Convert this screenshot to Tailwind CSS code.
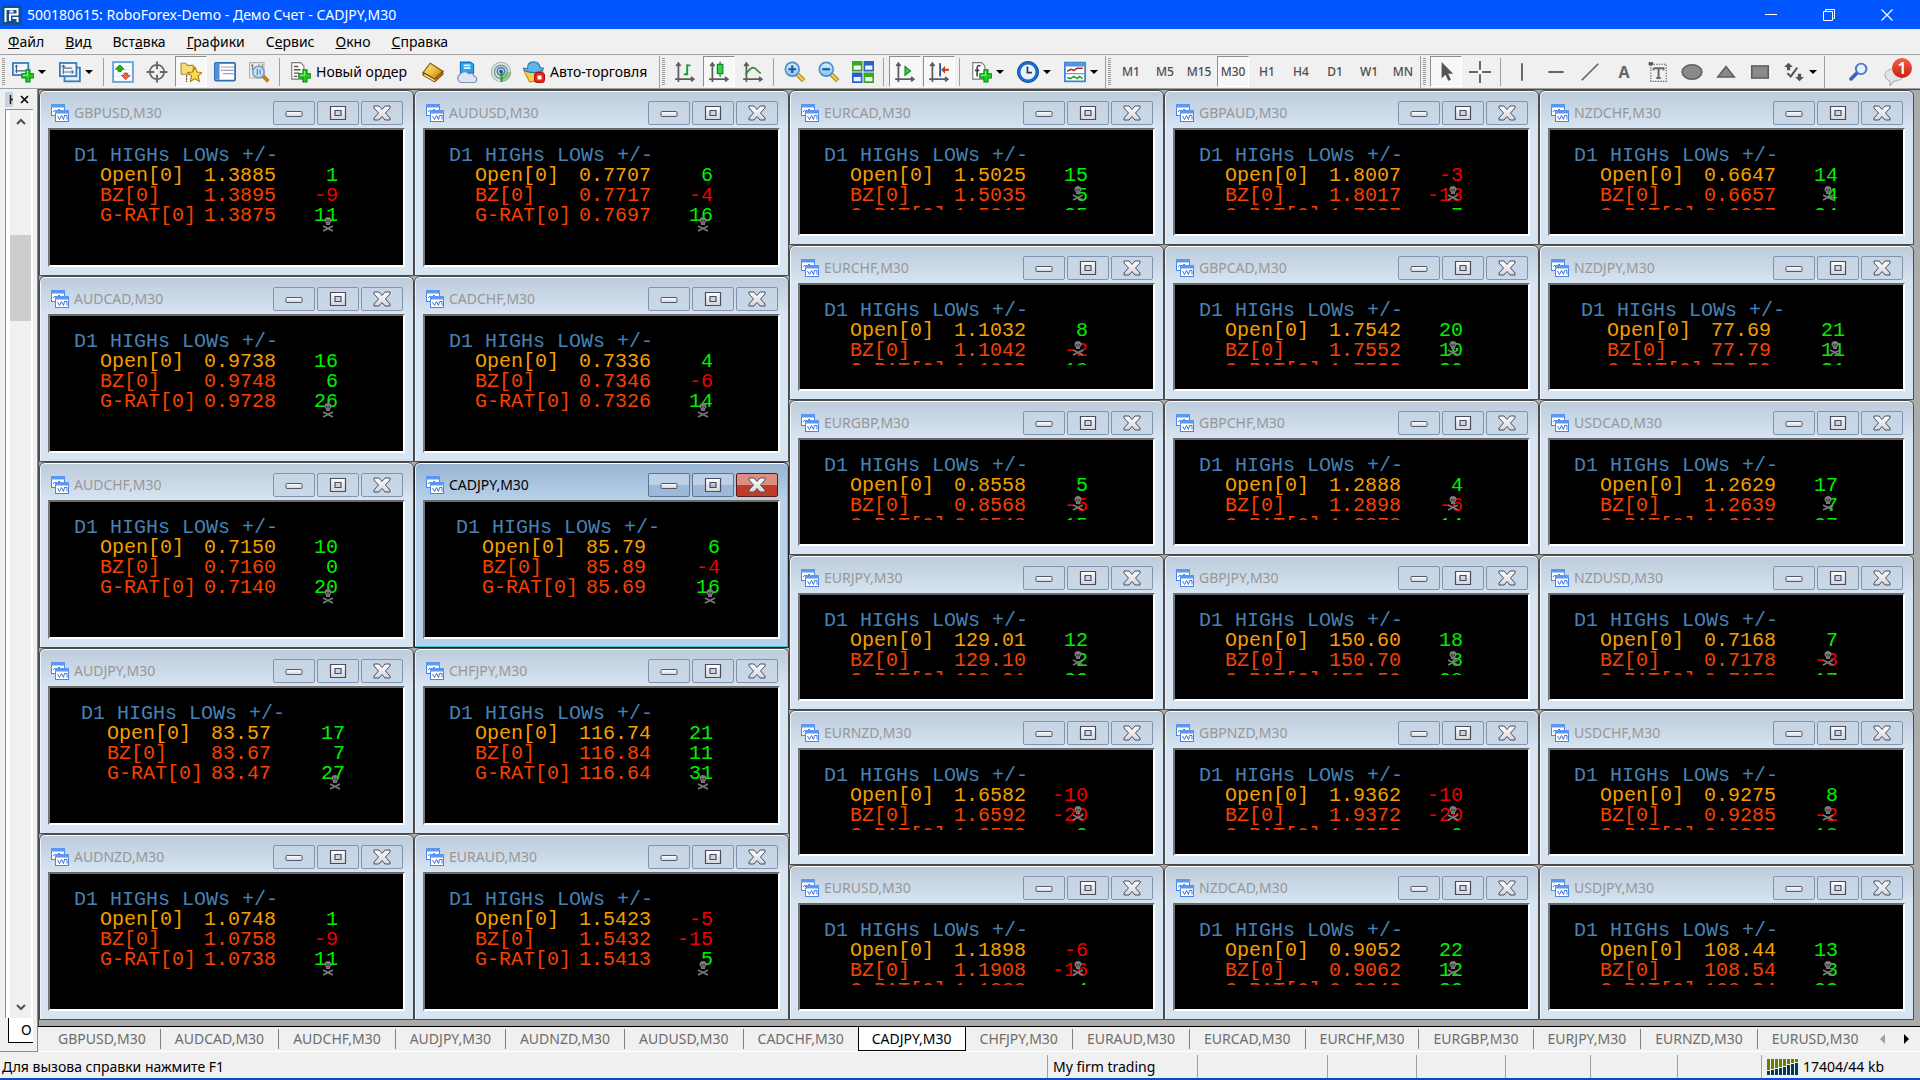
<!DOCTYPE html>
<html lang="ru">
<head>
<meta charset="utf-8">
<title>500180615: RoboForex-Demo - Демо Счет - CADJPY,M30</title>
<script src="https://cdn.jsdelivr.net/npm/@tailwindcss/browser@4"></script>
</head>
<body class="flex h-screen flex-col overflow-hidden bg-[#f0f0f0] font-['Noto_Sans',sans-serif] text-[14px] leading-5 text-black">

<svg class="absolute size-0" aria-hidden="true">
  <defs>
    <linearGradient id="gold" x1="0" y1="0" x2="1" y2="1"><stop offset="0" stop-color="#fff09a"/><stop offset=".5" stop-color="#efbf3c"/><stop offset="1" stop-color="#a8720c"/></linearGradient>
    <linearGradient id="sky" x1="0" y1="0" x2="0" y2="1"><stop offset="0" stop-color="#d8efff"/><stop offset="1" stop-color="#8cc4ee"/></linearGradient>
    <linearGradient id="red" x1="0" y1="0" x2="0" y2="1"><stop offset="0" stop-color="#f1604a"/><stop offset="1" stop-color="#cb1f10"/></linearGradient>
    <linearGradient id="metal" x1="0" y1="0" x2="0" y2="1"><stop offset="0" stop-color="#ffffff"/><stop offset="1" stop-color="#d5d5da"/></linearGradient>
    <symbol id="plus" viewBox="0 0 14 14"><path d="M5 1h4v4h4v4H9v4H5V9H1V5h4z" fill="#22d022" stroke="#0a7a12"/><path d="M6.500 2v4.500H2" fill="none" stroke="#8df58d"/></symbol>
    <symbol id="axes" viewBox="0 0 20 20"><path d="M4 2v17M1 16.500h17M2 4.500 4 2l2 2.500M15.500 14.500l2.500 2-2.500 2" fill="none" stroke="#5c5c5c" stroke-width="1.600"/></symbol>
    <symbol id="chart" viewBox="0 0 18 18"><rect x=".5" y=".5" width="13" height="11" fill="#fff" stroke="#4a86e8"/><path d="M0 0h14v3.500H0z" fill="#5b97f0"/><path d="M2 8l2-2 2 2 2-3 2 2" fill="none" stroke="#3f72d8"/><rect x="4.500" y="6.500" width="13" height="11" fill="#fff" stroke="#4a86e8"/><path d="M4 6h14v3.500H4z" fill="#5b97f0"/><path d="M6.500 12l2 3.500 2-4 2 4 1-4 2.500 0v4" fill="none" stroke="#3f72d8"/></symbol>
    <symbol id="wmin" viewBox="0 0 18 18"><rect x="1" y="7.500" width="16" height="5" rx="1" fill="url(#metal)" stroke="#55586e"/></symbol>
    <symbol id="wmax" viewBox="0 0 18 18"><path d="M1.500 2.500h15v13h-15zM6 6.500v5h6v-5z" fill="url(#metal)" fill-rule="evenodd" stroke="#4a4d62" stroke-width="1.200"/></symbol>
    <symbol id="wclose" viewBox="0 0 18 18"><path d="M1 2h5l3 3.500L12 2h5v2l-4.500 5 4.500 5v2h-5l-3-3.500L6 16H1v-2l4.500-5L1 4z" fill="url(#metal)" stroke="#4a4d62" stroke-linejoin="round"/></symbol>
    <symbol id="skull" viewBox="0 0 12 15"><path d="M2.500 3.500a3.500 3.500 0 0 1 7 0c0 1.500-1 2-1.500 2.500V8H4V6c-.5-.5-1.500-1-1.500-2.500z" fill="#7c7c7c"/><path d="M4 3.500h1.500v1H4zM6.500 3.500H8v1H6.500zM5.700 5.500h.6v1h-.6z" fill="#000"/><path d="M1 9l10 5M11 9 1 14" stroke="#7c7c7c" stroke-width="1.500"/></symbol>
  </defs>
</svg>

<header class="flex h-[29px] shrink-0 items-center bg-[#0057ff] text-white">
  <svg class="ml-0.5 size-5" viewBox="0 0 20 20"><rect width="20" height="20" rx="1" fill="#12508f"/><path d="M3.500 17V4h4M7.500 4h8v5.500H8V16M11.500 6.500H7.500M10.500 13h5v4" fill="none" stroke="#fff" stroke-width="2"/></svg>
  <h1 class="ml-[5px] flex-1">500180615: RoboForex-Demo - Демо Счет - CADJPY,M30</h1>
  <button aria-label="Свернуть" class="flex w-[58px] justify-center"><svg class="h-3 w-3" viewBox="0 0 12 12"><path d="M0 5.500h12" stroke="#fff"/></svg></button>
  <button aria-label="Восстановить" class="flex w-[58px] justify-center"><svg class="h-3 w-3" viewBox="0 0 12 12"><path d="M.5 2.500h9v9h-9zM2.500 2.500v-2h9v9h-2" fill="none" stroke="#fff"/></svg></button>
  <button aria-label="Закрыть" class="mr-1 flex w-[58px] justify-center"><svg class="h-3 w-3" viewBox="0 0 12 12"><path d="M.5.5l11 11M11.500.5l-11 11" stroke="#fff" stroke-width="1.200"/></svg></button>
</header>

<nav class="flex h-[26px] shrink-0 items-center gap-[21px] border-b border-[#a0a0a0] pl-2">
  <button><u>Ф</u>айл</button><button><u>В</u>ид</button><button>Вст<u>а</u>вка</button><button><u>Г</u>рафики</button><button>С<u>е</u>рвис</button><button><u>О</u>кно</button><button><u>С</u>правка</button>
</nav>

<div id="toolbar" role="toolbar" class="flex h-[34px] shrink-0 items-center border-b border-[#a0a0a0]"></div>

<main class="flex min-h-0 flex-1">
  <aside class="flex w-[38px] shrink-0 flex-col border-b border-r border-[#8a8a8a] pl-[5px] pr-1">
    <div class="flex h-[20px] items-center justify-between pr-1"><svg class="h-[15px] w-2" viewBox="0 0 8 15"><path d="M0 0h8v15H0z" fill="#c3d3e6"/><path d="M5.500 3v9M5.500 7.500H8" stroke="#401010" stroke-width="1.500"/></svg><button aria-label="Закрыть панель"><svg class="size-[9px]" viewBox="0 0 9 9"><path d="M1 1l7 7M8 1 1 8" stroke="#000" stroke-width="1.600"/></svg></button></div>
    <div class="flex flex-1 flex-col border-l border-t border-[#8f8f8f] bg-white pl-1 pr-0.5">
      <div class="flex flex-1 flex-col items-center bg-[#f0f0f0]">
        <svg class="mt-[7px] h-[9px] w-[10px] shrink-0" viewBox="0 0 10 9"><path d="M1 7l4-4 4 4" fill="none" stroke="#505050" stroke-width="2"/></svg>
        <div class="mt-[109px] h-[86px] w-full bg-[#cdcdcd]"></div>
        <svg class="mb-[6px] mt-auto h-[9px] w-[10px] shrink-0" viewBox="0 0 10 9"><path d="M1 2l4 4 4-4" fill="none" stroke="#505050" stroke-width="2"/></svg>
      </div>
    </div>
    <button class="mb-2 ml-[3px] h-[25px] border-b border-l border-black bg-white pl-3 text-left">О</button>
  </aside>

  <div class="flex min-w-0 flex-1 flex-col">
    <div class="grid min-h-0 flex-1 grid-cols-5 border-l border-t border-[#4c4c4c] bg-[#ababab] pb-[6px] pr-[6px]">
      <div id="left" class="col-span-2 grid grid-flow-col grid-cols-2 grid-rows-5"></div>
      <div id="right" class="col-span-3 grid grid-flow-col grid-cols-3 grid-rows-6"></div>
    </div>
    <div class="flex h-[26px] shrink-0 items-start border-t border-black pl-[6px] shadow-[inset_0_-1px_0_#fff]">
      <div id="tabs" role="tablist" class="flex min-w-0 flex-1 overflow-hidden text-[#6d6d6d]"></div>
      <button aria-label="Назад" class="mt-[7px] w-6"><svg class="mx-auto h-2.5 w-[5px]" viewBox="0 0 5 10"><path d="M5 0v10L0 5z" fill="#a0a0a0"/></svg></button>
      <button aria-label="Вперёд" class="mr-0.5 mt-[7px] w-6"><svg class="mx-auto h-2.5 w-[5px]" viewBox="0 0 5 10"><path d="M0 0v10l5-5z" fill="#000"/></svg></button>
    </div>
  </div>
</main>

<footer class="flex h-7 shrink-0 items-end border-b-2 border-[#0a48d0]">
  <span class="flex h-[23px] flex-1 items-center pl-0.5">Для вызова справки нажмите F1</span>
  <span class="flex h-[23px] w-[150px] items-center border-l border-[#a0a0a0] pl-[5px]">My firm trading</span>
  <span class="h-[23px] w-[130px] border-l border-[#a0a0a0]"></span>
  <span class="h-[23px] w-[89px] border-l border-[#a0a0a0]"></span>
  <span class="h-[23px] w-[89px] border-l border-[#a0a0a0]"></span>
  <span class="h-[23px] w-[85px] border-l border-[#a0a0a0]"></span>
  <span class="h-[23px] w-[87px] border-l border-[#a0a0a0]"></span>
  <span class="h-[23px] w-[84px] border-l border-[#a0a0a0]"></span>
  <span class="flex h-[23px] w-[159px] items-center gap-[5px] border-l border-[#a0a0a0] pl-[5px]">
    <svg class="h-4 w-[31px]" viewBox="0 0 31 16"><path d="M0 0h3v11H0zM4 0h3v10H4zM8 0h3v9H8zM12 0h3v8h-3zM16 0h3v7h-3zM20 0h3v5h-3zM24 0h3v4h-3zM28 0h3v3h-3z" fill="#6d7c00"/><path d="M0 12h3v4H0zM4 11h3v5H4zM8 10h3v6H8zM12 9h3v7h-3zM16 8h3v8h-3zM20 6h3v10h-3zM24 5h3v11h-3zM28 4h3v12h-3z" fill="#003a5c"/></svg>
    17404/44 kb</span>
</footer>

<script>
const svg = (body) => `<svg class="size-[22px] shrink-0" viewBox="0 0 20 20">${body}</svg>`;
const plus = '<use href="#plus" x="8" y="7" width="13" height="13"/>';
const axes = '<use href="#axes" width="20" height="20"/>';
const doc = '<path d="M2.500 1.500h8l3 3v12h-11z" fill="#fff" stroke="#777"/>';
const lens = (sign) => `<path d="M12 12l6 6" stroke="#8a6a10" stroke-width="4"/><path d="M12 12l6 6" stroke="#f2c744" stroke-width="2.500"/><circle cx="7.500" cy="7.500" r="6.300" fill="url(#sky)" stroke="#4a8fcc" stroke-width="1.500"/><path d="${sign}" stroke="#1c5a94" stroke-width="2"/>`;
const I = {
  newChart: '<rect x=".8" y="1.800" width="14" height="11" fill="#eef6ff" stroke="#3a7ab8" stroke-width="1.600"/><path d="M4 4v7M3 5.500 4 4l1 1.500M3 9h9" fill="none" stroke="#4a5a6a"/>' + plus,
  profiles: '<rect x="5" y="6" width="14" height="12.500" fill="#dcecfb" stroke="#3a7ab8" stroke-width="1.600"/><rect x=".8" y="1.800" width="15" height="12" fill="#eef6ff" stroke="#3a7ab8" stroke-width="1.600"/><path d="M4 4v8M2.500 5.500 4 4l1.500 1.500M3 10h10M11.500 8.500 13 10l-1.500 1.500M4 6.500h8" fill="none" stroke="#5a7390"/>',
  market: '<rect x="1" y="1" width="18" height="18" fill="#fff" stroke="#6fa5dc" stroke-width="1.800"/><path d="M3 5h14M3 8h14M3 11h14M3 14h14" stroke="#e3e8ee"/><path d="M7 3.500l4 4H8.500v2h-3v-2H3z" fill="#1db51d" stroke="#0b7a10" stroke-width=".7"/><path d="M12.500 17l4-4H14v-2h-3v2H8.500z" fill="#ef6a3a" stroke="#b33412" stroke-width=".7"/>',
  data: '<circle cx="10" cy="10" r="6.500" fill="none" stroke="#686868" stroke-width="1.600"/><path d="M10 .5v7M10 12.500v7M.5 10h7M12.500 10h7" stroke="#686868" stroke-width="1.800"/>',
  navigator: '<path d="M1 2h4l1.500 2H12v8H1z" fill="#f7df7c" stroke="#b28c1a"/><path d="M6 13v6" stroke="#333" stroke-dasharray="1.500 1"/><path d="M13.500 5.500l2 4.500 4.500.5-3.500 3 1 5-4-2.500-4 2.500 1-5L7 10.500l4.500-.5z" fill="#fbdc4c" stroke="#a97c0e"/>',
  terminal: '<rect x=".8" y="1.800" width="18.400" height="16" rx="1" fill="#fff" stroke="#2f6fb2" stroke-width="1.600"/><path d="M1.500 2.500H5V17H1.500z" fill="#4c93da"/><path d="M8 5.500h10M8 8.500h10M8 11.500h10" stroke="#8fa6c2"/><path d="M6.500 5.500h1M6.500 8.500h1" stroke="#e22"/>',
  tester: '<path d="M1.500 1.500h13v14h-13z" fill="#f2efe8" stroke="#b5afa2"/><path d="M4 3v5M3 4h2M10 3v4M13 3v5" stroke="#777"/><path d="M13.500 13.500l5 5" stroke="#b88612" stroke-width="3.500"/><circle cx="9.500" cy="10" r="5.200" fill="#c4e0f8" fill-opacity=".9" stroke="#7d9cc0" stroke-width="1.500"/><path d="M8.500 7v6M11 8v4" stroke="#5b8ab8" stroke-width="1.200"/>',
  order: doc + '<path d="M4.500 5h4M4.500 8h6M4.500 11h5M4.500 14h3" stroke="#555" stroke-width="1.300"/>' + plus,
  book: '<path d="M7.500 2 19 9.500 11.500 16.500 1 10.500z" fill="url(#gold)" stroke="#8a5c0a"/><path d="M1 10.500v2.500l10.500 6 7.500-7V9.500l-7.500 7z" fill="#c08a1c" stroke="#7a4d06"/><path d="M2 12.500l9.500 5.500" stroke="#fff4cf"/>',
  cloud: '<path d="M4 1h9l3 2v8H4z" fill="#2aa3ee" stroke="#0d6fc0"/><path d="M7 4h6M7 6.500h6" stroke="#e6f6ff" stroke-width="1.500"/><path d="M4.500 19.500a4 4 0 0 1-.5-7.500A4.500 4.500 0 0 1 11.500 11.500a3.500 3.500 0 0 1 5 2.300A2.900 2.900 0 0 1 16.500 19.500z" fill="#dde5f2" stroke="#7f90b2"/>',
  signal: '<circle cx="10" cy="10" r="8.800" fill="#dfe6e2" stroke="#a9b5ae"/><circle cx="10" cy="10" r="6" fill="none" stroke="#7f9fb2" stroke-width="1.500"/><circle cx="10" cy="9.500" r="3.400" fill="none" stroke="#4b7fa8" stroke-width="1.500"/><path d="M10 10h9.500A9.500 9.500 0 0 1 10.500 19z" fill="#5bb45b" fill-opacity=".5"/><path d="M10.500 10v9" stroke="#2c9c2c" stroke-width="2"/><circle cx="10" cy="9.500" r="1.800" fill="#245fa8"/>',
  auto: '<path d="M1 9h17l-4 9-8 1z" fill="#f7cf45" stroke="#b98b12"/><path d="M4 7C4 2 7 .8 9.500.8S15 2 15.500 6l3 .5c0 2.500-5 4-9 4s-9-1.500-9-4z" fill="#64b3e8" stroke="#2b7ab8"/><rect x="10.500" y="10.500" width="9" height="9" rx="3" fill="#e8291a" stroke="#a8120a"/><rect x="13.200" y="13.200" width="3.600" height="3.600" fill="#fff"/>',
  bars: axes + '<path d="M12 3v10M12 4h3M9 12h3" stroke="#1f9a2c" stroke-width="1.700"/>',
  candles: axes + '<path d="M11 .5v14" stroke="#0c7d1a"/><rect x="8.500" y="3" width="5" height="8.500" fill="#2fd84a" stroke="#0c7d1a"/>',
  line: axes + '<path d="M3 12c3-2 4-6 7-6s4 4 7 5" fill="none" stroke="#2c8f38" stroke-width="1.600"/>',
  zoomIn: lens('M4 7.500h7M7.500 4v7'),
  zoomOut: lens('M4 7.500h7'),
  tile: '<path d="M0 0h9.500v9.500H0zM10.500 10.500H20V20h-9.500z" fill="#3ba71f"/><path d="M10.500 0H20v9.500h-9.500zM0 10.500h9.500V20H0z" fill="#2b5fcb"/><path d="M1.500 4H8v4H1.500zM12 4h6.500v4H12zM1.500 14.500H8v4H1.500zM12 14.500h6.500v4H12z" fill="#eaf3ff"/>',
  scroll: axes + '<path d="M10 5v8l5-4z" fill="#3bd054" stroke="#0f8a22"/>',
  shift: axes + '<path d="M11 2v12" stroke="#1c62a8" stroke-width="1.700"/><path d="M19 8h-5" stroke="#c23a12" stroke-width="1.800"/><path d="M15.500 4.500v7L12 8z" fill="#c23a12"/>',
  indicators: doc + '<path d="M9.500 4.500c-2-1-3 0-3 2V14M4.500 8.500h4" fill="none" stroke="#444" stroke-width="1.500"/>' + plus,
  clock: '<circle cx="10" cy="10" r="8.300" fill="#e8f3ff" stroke="#1f6fca" stroke-width="3"/><circle cx="10" cy="10" r="9.500" fill="none" stroke="#134a90" stroke-width=".8"/><path d="M9.500 5v5.500h4" fill="none" stroke="#333" stroke-width="1.500"/>',
  templates: '<rect x=".8" y="1.500" width="18.400" height="17" fill="#fff" stroke="#3d85cc" stroke-width="1.600"/><path d="M1 2h18v3H1z" fill="#4f96de"/><path d="M1 11.500h18" stroke="#5a94cc"/><path d="M3 9.500l3-2 3 1 3-2h5" fill="none" stroke="#b22" stroke-width="1.400"/><path d="M3 15l3 1 3-2 3 2 2-2 3 2" fill="none" stroke="#2a9a2a" stroke-width="1.400"/>',
  cursor: '<path d="M6 1v15l3.500-3.500L12 18l2.500-1-2.500-5.500h4.500z" fill="#555"/>',
  cross: '<path d="M10 0v8M10 12v8M0 10h8M12 10h8" stroke="#666" stroke-width="1.800"/>',
  vline: '<path d="M10 2v16" stroke="#666" stroke-width="1.800"/>',
  hline: '<path d="M3 10h14" stroke="#666" stroke-width="1.800"/>',
  trend: '<path d="M2.500 17.500l15-15" stroke="#666" stroke-width="1.600"/>',
  label: '<rect x="3.500" y="3" width="14" height="15.500" fill="none" stroke="#555" stroke-dasharray="1.200 1.200"/><path d="M1.500 1h4v3h-4z" fill="#555"/><path d="M6 6.500h9v2M6 6.500v2M10.500 6.500v9.500M8.500 15.500h4" fill="none" stroke="#666" stroke-width="1.800"/>',
  ellipse: '<ellipse cx="10" cy="10" rx="9" ry="6.500" fill="#8a8a8a" stroke="#5f5f5f" stroke-width="1.400"/>',
  triangle: '<path d="M10 5l7.500 9.500h-15z" fill="#8a8a8a" stroke="#5f5f5f" stroke-width="1.400"/>',
  rect: '<rect x="2.500" y="4.500" width="15" height="11" fill="#8a8a8a" stroke="#5f5f5f" stroke-width="1.400"/>',
  arrows: '<path d="M5 1.500l4 4H6.500v3h-3v-3H1zM15 18.500l-4-4h2.500v-3h3v3H19z" fill="#555"/><path d="M4 11l3 3 6-8" fill="none" stroke="#555" stroke-width="1.800"/>',
};
const btn = (icon, name, on) => `<button aria-label="${name}" class="flex h-[31px] w-[34px] items-center justify-center"><span class="${on
  ? 'flex h-[31px] w-8 items-center justify-center border border-b-white border-l-[#8f8f8f] border-r-white border-t-[#8f8f8f] bg-[#f8f8f8]'
  : 'flex h-[31px] w-8 items-center justify-center'}">${icon}</span></button>`;
const drop = (icon, name) => `<button aria-label="${name}" class="flex h-[31px] w-[47px] items-center gap-1 pl-1.5">${icon}<svg class="h-1 w-2" viewBox="0 0 8 4"><path d="M0 0h8L4 4z"/></svg></button>`;
const text = (icon, name) => `<button class="flex h-[31px] items-center gap-[5px] px-[5px] whitespace-nowrap">${icon}${name}</button>`;
const sep = '<span class="ml-[3px] mr-1 h-7 w-px bg-[#a0a0a0]"></span>';
const thin = '<span class="ml-[3px] mr-0.5 h-7 w-px bg-[#a0a0a0]"></span>';
const grip = '<span class="mr-[3px] h-7 w-[3px] bg-[repeating-linear-gradient(180deg,#9a9a9a_0_1px,#f0f0f0_1px_2px)]"></span>';
const edge = '<span class="mr-0.5 h-8 w-px bg-[#a0a0a0]"></span>';
const letter = (s) => `<span class="text-[12px] font-medium text-[#4d4d4d]">${s}</span>`;

document.getElementById('toolbar').innerHTML = [
  '<span class="w-0.5"></span>', grip.replace('mr-[3px]', 'mr-px'),
  drop(svg(I.newChart), 'Новый график'), drop(svg(I.profiles), 'Профили'), thin,
  btn(svg(I.market), 'Обзор рынка'), btn(svg(I.data), 'Окно данных'), btn(svg(I.navigator), 'Навигатор', 1), btn(svg(I.terminal), 'Терминал'), btn(svg(I.tester), 'Тестер'), sep,
  text(svg(I.order), '<span class="w-[95px] text-left">Новый ордер</span>'),
  btn(svg(I.book), 'MetaEditor'), btn(svg(I.cloud), 'MQL5'), btn(svg(I.signal), 'Сигналы'),
  text(svg(I.auto), '<span class="w-[102px] text-left">Авто-торговля</span>'),
  '<span class="w-0.5"></span>', edge, grip,
  btn(svg(I.bars), 'Бары'), btn(svg(I.candles), 'Свечи', 1), btn(svg(I.line), 'Линия'), sep,
  btn(svg(I.zoomIn), 'Увеличить'), btn(svg(I.zoomOut), 'Уменьшить'), btn(svg(I.tile), 'Плитка'), sep,
  btn(svg(I.scroll), 'Автопрокрутка', 1), btn(svg(I.shift), 'Сдвиг графика', 1), sep,
  drop(svg(I.indicators), 'Индикаторы'), drop(svg(I.clock), 'Периоды'), drop(svg(I.templates), 'Шаблоны'), edge, grip,
  ...['M1', 'M5', 'M15', 'M30', 'H1', 'H4', 'D1', 'W1', 'MN'].map(s => btn(letter(s), s, s === 'M30')), edge, grip,
  btn(svg(I.cursor), 'Курсор', 1), btn(svg(I.cross), 'Перекрестие'), sep,
  btn(svg(I.vline), 'Вертикальная линия'), btn(svg(I.hline), 'Горизонтальная линия'), btn(svg(I.trend), 'Трендовая линия'),
  btn('<span class="text-[16px] font-bold text-[#666]">A</span>', 'Текст'),
  btn(svg(I.label), 'Метка'), btn(svg(I.ellipse), 'Эллипс'), btn(svg(I.triangle), 'Треугольник'), btn(svg(I.rect), 'Прямоугольник'),
  drop(svg(I.arrows), 'Стрелки'), '<span class="h-8 w-px bg-[#a0a0a0]"></span>',
  '<button aria-label="Поиск" class="ml-auto mr-4"><svg class="size-[19px]" viewBox="0 0 18 18"><path d="M8.500 9.500 2 16" stroke="#3566c4" stroke-width="3.500" stroke-linecap="round"/><circle cx="11.500" cy="6.500" r="5" fill="#e6effa" stroke="#4a74c8" stroke-width="1.800"/></svg></button>',
  '<button aria-label="Сообщения" class="relative h-8 w-9 pr-1"><svg class="size-8" viewBox="0 0 32 32"><path d="M1 19c0-4 4-6 9-6s9 2 9 6-4 6-9 6l-4 5v-5c-3-1-5-3-5-6z" fill="#e3e3ea" stroke="#a8a8b4"/><circle cx="18" cy="12" r="10" fill="url(#red)"/></svg><span class="absolute left-2 top-[2px] w-5 text-center text-[16px] font-semibold text-white">1</span></button>',
].join('');

const left = [
  ['GBPUSD', '1.3885', 1, '1.3895', -9, '1.3875', 11], ['AUDCAD', '0.9738', 16, '0.9748', 6, '0.9728', 26],
  ['AUDCHF', '0.7150', 10, '0.7160', 0, '0.7140', 20], ['AUDJPY', '83.57', 17, '83.67', 7, '83.47', 27],
  ['AUDNZD', '1.0748', 1, '1.0758', -9, '1.0738', 11], ['AUDUSD', '0.7707', 6, '0.7717', -4, '0.7697', 16],
  ['CADCHF', '0.7336', 4, '0.7346', -6, '0.7326', 14], ['CADJPY', '85.79', 6, '85.89', -4, '85.69', 16],
  ['CHFJPY', '116.74', 21, '116.84', 11, '116.64', 31], ['EURAUD', '1.5423', -5, '1.5432', -15, '1.5413', 5],
];
const right = [
  ['EURCAD', '1.5025', 15, '1.5035', 5, '1.5015', 25], ['EURCHF', '1.1032', 8, '1.1042', -2, '1.1022', 18],
  ['EURGBP', '0.8558', 5, '0.8568', -5, '0.8548', 15], ['EURJPY', '129.01', 12, '129.10', 2, '128.91', 22],
  ['EURNZD', '1.6582', -10, '1.6592', -20, '1.6572', 0], ['EURUSD', '1.1898', -6, '1.1908', -16, '1.1888', 4],
  ['GBPAUD', '1.8007', -3, '1.8017', -13, '1.7997', 7], ['GBPCAD', '1.7542', 20, '1.7552', 10, '1.7532', 30],
  ['GBPCHF', '1.2888', 4, '1.2898', -6, '1.2878', 14], ['GBPJPY', '150.60', 18, '150.70', 8, '150.50', 28],
  ['GBPNZD', '1.9362', -10, '1.9372', -20, '1.9352', 0], ['NZDCAD', '0.9052', 22, '0.9062', 12, '0.9042', 32],
  ['NZDCHF', '0.6647', 14, '0.6657', 4, '0.6637', 24], ['NZDJPY', '77.69', 21, '77.79', 11, '77.59', 31],
  ['USDCAD', '1.2629', 17, '1.2639', 7, '1.2619', 27], ['NZDUSD', '0.7168', 7, '0.7178', -3, '0.7158', 17],
  ['USDCHF', '0.9275', 8, '0.9285', -2, '0.9265', 18], ['USDJPY', '108.44', 13, '108.54', 3, '108.34', 23],
];
const row = (name, price, diff, colour) => `<tr class="${colour}"><th scope="row" class="w-[104px] p-0 text-left font-normal">${name}</th><td class="w-[72px] p-0">${price}</td><td class="${diff < 0 ? 'w-[62px] p-0 text-right text-[#f00000]' : 'w-[62px] p-0 text-right text-[#00f000]'}">${diff}</td></tr>`;
const win = (short) => ([s, a, b, c, d, e, f]) => {
  const on = s === 'CADJPY', five = a.length === 5;
  const wb = on
    ? 'flex h-6 w-[42px] items-center justify-center rounded-[2px] border border-[#5d7594] bg-linear-to-b from-[#bcd0e6] from-50% to-[#9db8d8] to-50%'
    : 'flex h-6 w-[42px] items-center justify-center rounded-[2px] border border-[#8493ad] bg-linear-to-b from-[#c6d4e3] to-[#c9d8e8]';
  const wc = on ? 'flex h-6 w-[42px] items-center justify-center rounded-[2px] border border-[#5a1a18] bg-linear-to-b from-[#dc8f80] from-50% to-[#bd3d28] to-50%' : wb;
  return `<section class="${on
    ? 'flex min-w-0 flex-col rounded-t-[6px] border border-[#222] bg-linear-to-b from-[#97b3d1] to-[#b9d1ea] to-[37px] px-2 pb-2 shadow-[inset_0_1px_0_#fff,inset_-1px_-1px_0_#3fc4e0,inset_1px_0_0_#e8f2fc]'
    : 'flex min-w-0 flex-col rounded-t-[6px] border border-[#4c4c4c] bg-linear-to-b from-[#bccbda] to-[#d7e4f2] to-[37px] px-2 pb-2 shadow-[inset_0_1px_0_#fff,inset_1px_0_0_#eef4fa]'}">
  <header class="flex h-[37px] shrink-0 items-center pl-[3px] pr-0.5 pt-1.5">
    <svg class="size-[18px] shrink-0"><use href="#chart"/></svg>
    <h2 class="${on ? 'ml-[5px] flex-1 text-black' : 'ml-[5px] flex-1 text-[#979797]'}">${s},M30</h2>
    <div class="flex gap-0.5">
      <button aria-label="Свернуть ${s}" class="${wb}"><svg class="size-[18px]"><use href="#wmin"/></svg></button>
      <button aria-label="Развернуть ${s}" class="${wb}"><svg class="size-[18px]"><use href="#wmax"/></svg></button>
      <button aria-label="Закрыть ${s}" class="${wc}"><svg class="size-[18px]"><use href="#wclose"/></svg></button>
    </div>
  </header>
  <div class="min-h-0 flex-1 overflow-hidden border-2 border-b-white border-l-[#777] border-r-white border-t-[#6a6a6a] bg-black">
    <div class="${short
      ? (five ? 'relative h-20 overflow-hidden pl-[31px] pt-4' : 'relative h-20 overflow-hidden pl-6 pt-4')
      : (five ? 'relative pl-[31px] pt-4' : 'relative pl-6 pt-4')}">
      <svg class="${five
        ? (short ? 'absolute left-[279px] top-14 h-[15px] w-3' : 'absolute left-[279px] top-[87px] h-[15px] w-3')
        : (short ? 'absolute left-[272px] top-14 h-[15px] w-3' : 'absolute left-[272px] top-[87px] h-[15px] w-3')}"><use href="#skull"/></svg>
      <table class="ml-[26px] w-[238px] table-fixed border-collapse font-['Liberation_Mono',monospace] text-[20px] leading-5">
        <caption class="-ml-[26px] whitespace-nowrap text-left text-[#4682b4]">D1 HIGHs LOWs +/-</caption>
        <tbody>${row('Open[0]', a, b, 'text-[#f59f00]')}${row('BZ[0]', c, d, 'text-[#f54200]')}${row('G-RAT[0]', e, f, 'text-[#f54200]')}</tbody>
      </table>
    </div>
  </div>
</section>`;
};
document.getElementById('left').innerHTML = left.map(win(false)).join('');
document.getElementById('right').innerHTML = right.map(win(true)).join('');

document.getElementById('tabs').innerHTML = ['GBPUSD', 'AUDCAD', 'AUDCHF', 'AUDJPY', 'AUDNZD', 'AUDUSD', 'CADCHF', 'CADJPY', 'CHFJPY', 'EURAUD', 'EURCAD', 'EURCHF', 'EURGBP', 'EURJPY', 'EURNZD', 'EURUSD']
  .map(s => `<button role="tab" class="${s === 'CADJPY'
    ? 'flex h-6 shrink-0 items-center border border-t-0 border-black bg-white px-[13px] text-black'
    : 'flex h-6 shrink-0 items-center'}">${s === 'CADJPY' ? s + ',M30' : `<span class="${s === 'CADCHF' || s === 'EURUSD' ? 'px-[14px]' : 'border-r border-[#808080] px-[14px]'}">${s},M30</span>`}</button>`).join('');
</script>
</body>
</html>
